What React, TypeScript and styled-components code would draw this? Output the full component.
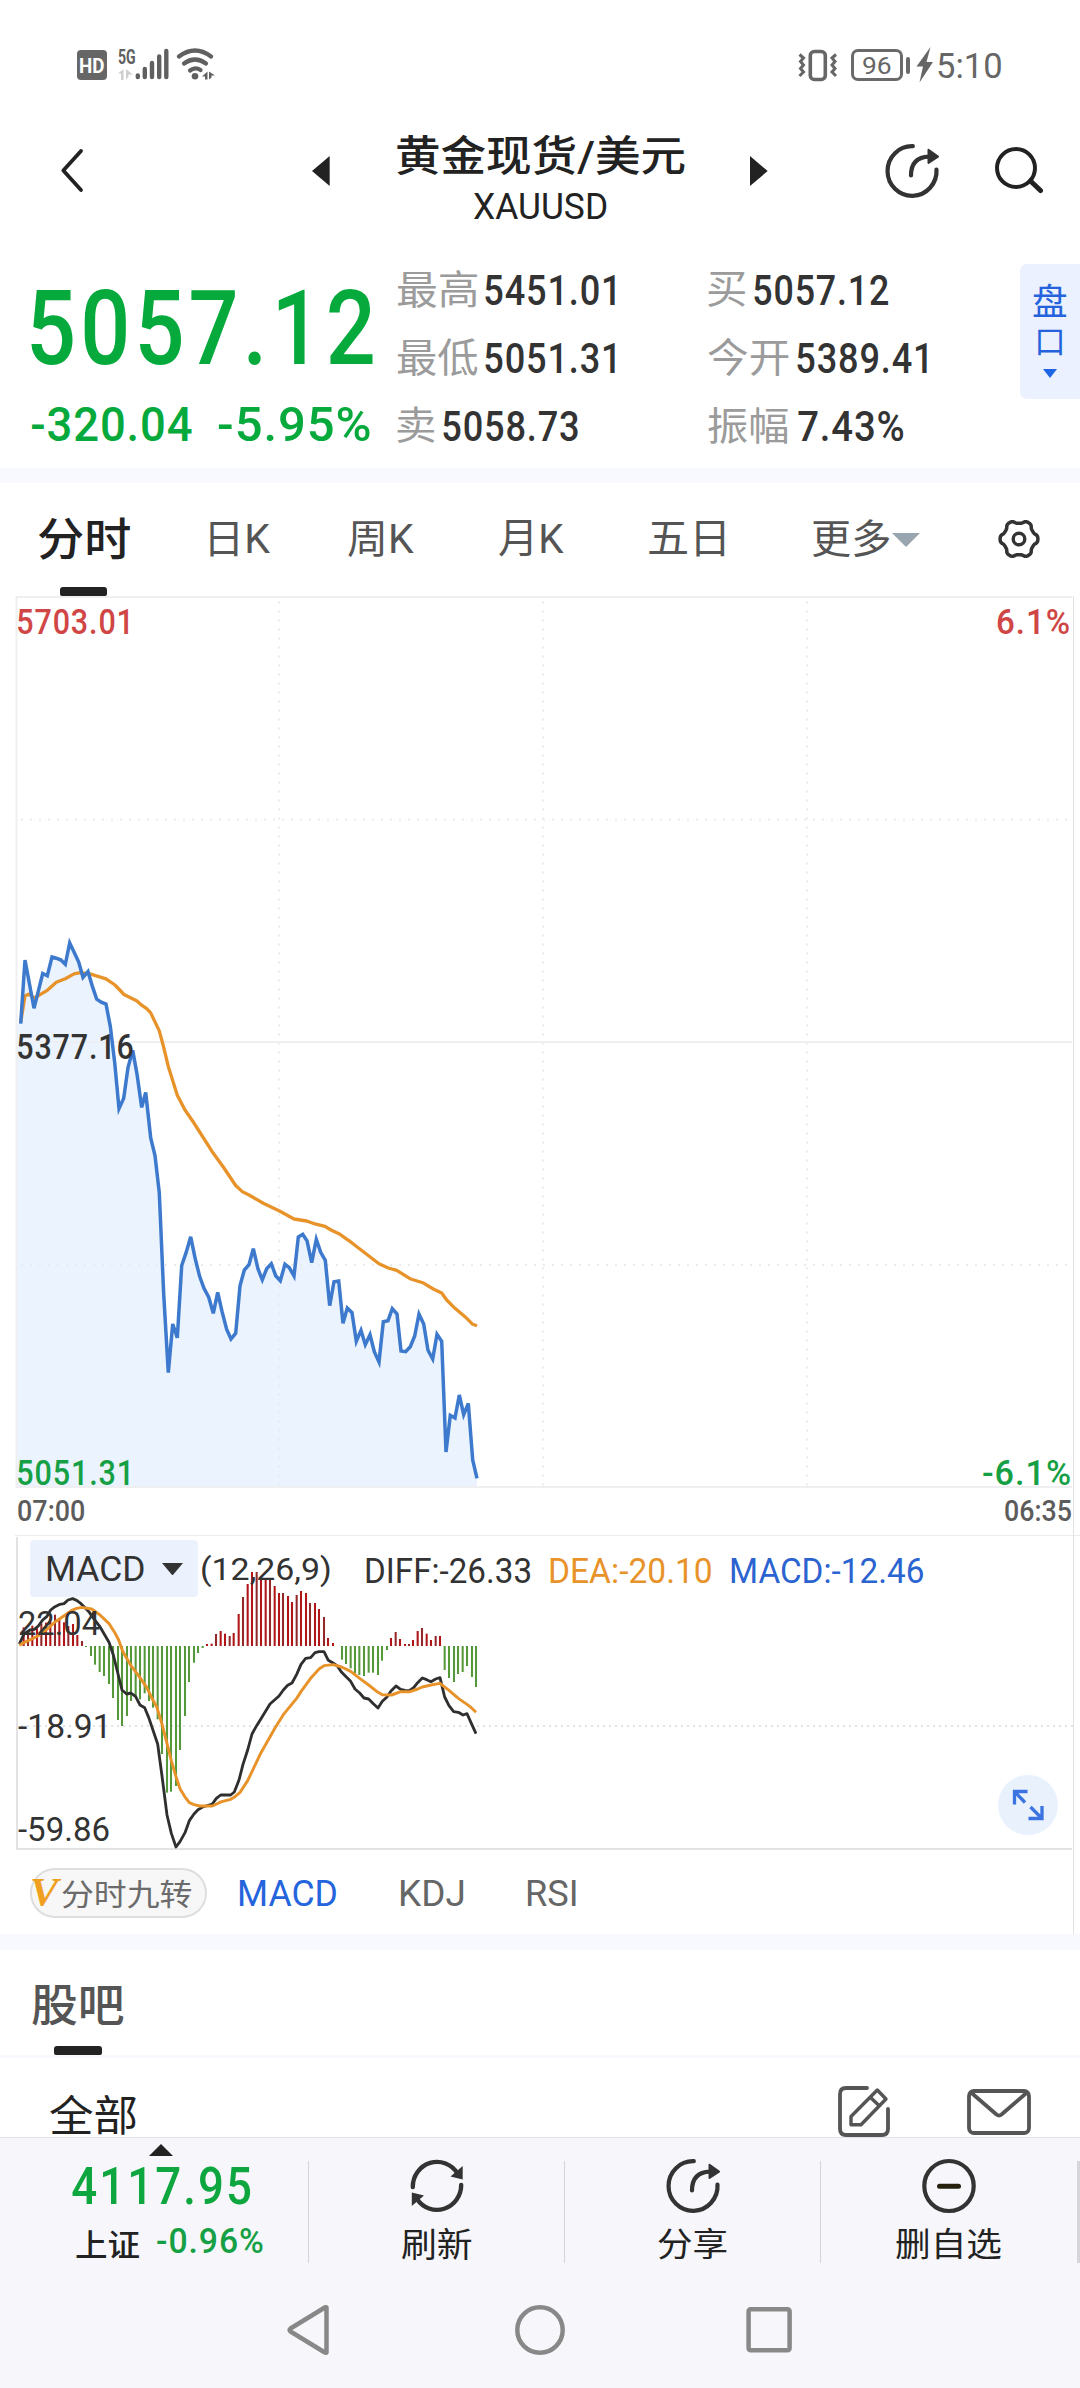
import React, { useLayoutEffect, useRef, useState } from "react";
import styled, { createGlobalStyle } from "styled-components";

const SANS = 'Roboto, "Noto Sans CJK SC", sans-serif';
const SERIF = '"Liberation Serif", serif';
const GREEN = "#06a93c";
const INK = "#222222";
const VALUE = "#333333";
const GREY = "#555555";
const BLUE = "#2563dd";
const ORANGE = "#e8932a";

const GlobalStyle = createGlobalStyle`
  html, body { margin: 0; padding: 0; background: #fff; }
  * { box-sizing: border-box; }
  svg { display: block; flex: none; }
`;

/* ---------- text that is fitted to the width of its column ---------- */

const FitBox = styled.span<{ $w: number; $h: number; $ml: number; $mt: number }>`
  display: block;
  flex: none;
  width: ${(p) => p.$w}px;
  height: ${(p) => p.$h}px;
  margin-left: ${(p) => p.$ml}px;
  margin-top: ${(p) => p.$mt}px;
`;

const FitInner = styled.span<{
  $size: number;
  $weight: number;
  $color: string;
  $family: string;
  $italic: boolean;
  $spacing: number;
}>`
  display: inline-block;
  vertical-align: top;
  white-space: nowrap;
  transform-origin: 0 0;
  font-family: ${(p) => p.$family};
  font-size: ${(p) => p.$size}px;
  font-weight: ${(p) => p.$weight};
  font-style: ${(p) => (p.$italic ? "italic" : "normal")};
  line-height: ${(p) => p.$size}px;
  letter-spacing: ${(p) => p.$spacing}px;
  color: ${(p) => p.$color};
`;

type FitProps = {
  children: string;
  w: number;
  h: number;
  size?: number;
  weight?: number;
  color?: string;
  family?: string;
  italic?: boolean;
  spacing?: number;
  ml?: number;
  mt?: number;
};

function Fit({
  children,
  w,
  h,
  size,
  weight = 400,
  color = INK,
  family = SANS,
  italic = false,
  spacing = 0,
  ml = 0,
  mt = 0,
}: FitProps) {
  const ref = useRef<HTMLSpanElement>(null);
  const [transform, setTransform] = useState("none");
  const fontSize = size ?? Math.round(h / 0.711);
  useLayoutEffect(() => {
    const ctx = document.createElement("canvas").getContext("2d");
    if (!ctx || !ref.current) return;
    ctx.font = `${italic ? "italic " : ""}${weight} ${fontSize}px ${family}`;
    const m = ctx.measureText(children);
    const inkW = m.actualBoundingBoxRight + m.actualBoundingBoxLeft + spacing * (children.length - 1);
    const inkH = m.actualBoundingBoxAscent + m.actualBoundingBoxDescent;
    const baseline = fontSize / 2 + (m.fontBoundingBoxAscent - m.fontBoundingBoxDescent) / 2;
    const sx = w / inkW;
    const sy = h / inkH;
    const tx = m.actualBoundingBoxLeft * sx;
    const ty = (m.actualBoundingBoxAscent - baseline) * sy;
    setTransform(`translate(${tx}px, ${ty}px) scale(${sx}, ${sy})`);
  }, [children, w, h, fontSize, weight, family, italic, spacing]);
  return (
    <FitBox $w={w} $h={h} $ml={ml} $mt={mt}>
      <FitInner
        ref={ref}
        $size={fontSize}
        $weight={weight}
        $color={color}
        $family={family}
        $italic={italic}
        $spacing={spacing}
        style={{ transform }}
      >
        {children}
      </FitInner>
    </FitBox>
  );
}

/* ---------- layout ---------- */

const Screen = styled.div`
  width: 1080px;
  height: 2388px;
  display: flex;
  flex-direction: column;
  background: #fff;
  overflow: hidden;
`;

const StatusBar = styled.div`
  height: 110px;
  padding: 46px 79px 0 76.5px;
  display: flex;
  justify-content: space-between;
`;

const StatusGroup = styled.div`
  height: 38px;
  display: flex;
  align-items: center;
`;

const HdBadge = styled.div`
  width: 30px;
  height: 30px;
  border-radius: 4px;
  background: #666;
  display: flex;
  align-items: center;
  justify-content: center;
`;

const NetworkLabel = styled.div`
  width: 17px;
  margin-left: 11.5px;
  display: flex;
  flex-direction: column;
  gap: 6px;
`;

const Battery = styled.div`
  width: 52.6px;
  height: 32px;
  margin-left: 13px;
  border: 3px solid #6a6a6a;
  border-radius: 7px;
  display: flex;
  align-items: center;
  justify-content: center;
`;

const BatteryNub = styled.div`
  width: 4px;
  height: 17px;
  margin-left: 2.6px;
  border-radius: 2px;
  background: #6a6a6a;
`;

const Header = styled.header`
  height: 130px;
  padding-left: 60px;
  display: flex;
  align-items: flex-start;
`;

const IconSlot = styled.div<{ $ml: number; $mt: number }>`
  margin-left: ${(p) => p.$ml}px;
  margin-top: ${(p) => p.$mt}px;
`;

const TitleBlock = styled.div`
  width: 288px;
  margin-left: 66.7px;
  padding-top: 24px;
  display: flex;
  flex-direction: column;
  align-items: center;
`;

const Quote = styled.section`
  height: 228px;
  display: flex;
`;

const PriceColumn = styled.div`
  width: 396.7px;
  padding: 48.7px 0 0 31px;
  flex: none;
`;

const ChangeRow = styled.div`
  display: flex;
  padding-top: 42px;
`;

const StatColumn = styled.div<{ $w: number }>`
  width: ${(p) => p.$w}px;
  flex: none;
  padding-top: 15.7px;
`;

const StatRow = styled.div`
  height: 68px;
  display: flex;
  align-items: center;
`;

const DepthBadge = styled.button`
  width: 60px;
  height: 134.7px;
  margin: 24px 0 0 auto;
  padding: 19.3px 0 0;
  border: 0;
  border-radius: 7px 0 0 7px;
  background: #ebf1fe;
  display: flex;
  flex-direction: column;
  align-items: center;
`;

const Band = styled.div<{ $h: number }>`
  height: ${(p) => p.$h}px;
  flex: none;
  background: #f7f9fe;
`;

const PeriodTabs = styled.nav`
  height: 113px;
  display: flex;
  align-items: center;
`;

const ActiveTab = styled.div`
  align-self: stretch;
  margin-left: 37.5px;
  display: flex;
  flex-direction: column;
  align-items: center;
  padding-top: 35px;
`;

const Underline = styled.div<{ $mt: number; $ml?: number }>`
  width: 47.5px;
  height: 9px;
  flex: none;
  margin-top: ${(p) => p.$mt}px;
  margin-left: ${(p) => p.$ml ?? 0}px;
  border-radius: 3px 3px 2px 2px;
  background: ${INK};
`;

const ChartArea = styled.section`
  position: relative;
  height: 1338px;
  flex: none;
  display: flex;
  flex-direction: column;
  &::after {
    content: "";
    position: absolute;
    left: 1073px;
    top: 0;
    width: 1px;
    height: 100%;
    background: #e2e2e2;
  }
`;

const ChartBox = styled.div<{ $h: number }>`
  position: relative;
  height: ${(p) => p.$h}px;
  flex: none;
`;

const AxisLabel = styled.div<{ $x: number; $y: number }>`
  position: absolute;
  left: ${(p) => p.$x}px;
  top: ${(p) => p.$y}px;
`;

const TimeRow = styled.div`
  height: 46px;
  margin-left: 15px;
  padding: 11px 9px 0 3px;
  border-bottom: 1px solid #ececee;
  display: flex;
  justify-content: space-between;
`;

const IndicatorHeader = styled.div`
  position: absolute;
  left: 30px;
  top: 4px;
  height: 57px;
  display: flex;
  align-items: center;
`;

const IndicatorSelect = styled.button`
  width: 168px;
  height: 57px;
  padding: 1px 15px 0 16.7px;
  border: 0;
  border-radius: 4px;
  background: #ebf2fe;
  display: flex;
  align-items: center;
  justify-content: space-between;
`;

const ExpandButton = styled.button`
  position: absolute;
  left: 998px;
  top: 239px;
  width: 60px;
  height: 60px;
  padding: 0;
  border: 0;
  border-radius: 50%;
  background: #e9f1fd;
  display: flex;
  align-items: center;
  justify-content: center;
`;

const IndicatorTabs = styled.div`
  height: 84px;
  padding: 1px 0 0 30px;
  display: flex;
  align-items: center;
`;

const Pill = styled.button`
  width: 177px;
  height: 50px;
  padding: 0;
  border: 2px solid #dedede;
  border-radius: 25px;
  background: #f7f7f7;
  display: flex;
  align-items: center;
`;

const ForumHead = styled.section`
  height: 108px;
  flex: none;
  padding: 35px 0 0 31.7px;
  border-bottom: 3px solid #f7f9fe;
`;

const ForumFilter = styled.section`
  height: 79px;
  flex: none;
  padding-left: 50px;
  display: flex;
  align-items: flex-start;
`;

const BottomBar = styled.footer`
  height: 127px;
  flex: none;
  border-top: 1px solid #e2e2e4;
  background: #f7f7fb;
  display: flex;
`;

const IndexCell = styled.div`
  width: 308px;
  padding-top: 5.5px;
  display: flex;
  flex-direction: column;
`;

const IndexRow = styled.div`
  display: flex;
`;

const Divider = styled.div<{ $w: number }>`
  width: ${(p) => p.$w}px;
  height: 102px;
  margin-top: 23px;
  flex: none;
  background: #d6d6d9;
`;

const ActionCell = styled.button`
  width: 255.2px;
  padding: 20px 0 0;
  border: 0;
  background: transparent;
  display: flex;
  flex-direction: column;
  align-items: center;
`;

const NavBar = styled.div`
  flex: 1;
  padding: 38px 0 0 284px;
  background: #f7f7fb;
  display: flex;
  align-items: flex-start;
`;

/* ---------- data ---------- */

const PRICE = `20.7,1023.6 25,960 34,1008.3 42.7,973.5 47.3,975.8 52,957 56.3,958.2 61,960.1 65.3,964.3 69.7,943 74,952 78.7,962 83,977.3 88,971.6 92.3,986.1 96.7,999.1 101.3,1002.2 106,1004.1 110.3,1026.3 114.7,1062.6 119,1108.6 123.7,1098.2 128,1067.6 132.7,1050.4 137,1074.1 141.7,1107.4 145.7,1092.5 150.7,1138 155,1155.6 159.3,1192.8 163.7,1294.2 168.3,1372.6 172.7,1324 177.3,1337.8 181.7,1265.5 186,1252.9 190.7,1236.8 195.3,1259 199.7,1276.6 204,1288.4 208.7,1297.2 213.3,1313.3 217.7,1292.3 222,1311.4 226.7,1329.4 231,1339 235.7,1333.2 240,1285.8 244.3,1270.1 249,1264.7 253.3,1248.7 258,1269 262.3,1279.7 266.7,1268.7 271.3,1263.7 275.7,1275.7 280.3,1280.7 285,1264.3 289.3,1267.7 294,1276 298.3,1237 302.7,1234.3 307,1240.7 311.7,1262.7 316.3,1239.3 320.7,1252.3 325.3,1260.3 329.7,1305.7 334,1281.7 338.7,1281 343,1323.3 347.3,1308 352,1312.7 356.3,1341.3 361,1330.3 365.3,1344.7 370,1334.7 374.3,1351.7 379,1362 383.3,1321.7 388,1320.7 392.3,1308.7 397,1314 401,1351 405.7,1351.7 410.3,1346.7 414.7,1336 419,1314 423.7,1324 428,1350.3 432.7,1359 437,1334.3 441.7,1341.3 446,1452 450.3,1415.3 455,1418 459.3,1395 463.7,1414.7 468.3,1403.3 472.7,1460 477,1478.3`;

const AVERAGE = `20.7,1022.5 25,995.7 29.3,994.1 34,998 38.3,995.7 47.3,990.3 56.3,982.3 65.3,978.8 74,973.9 80,972.7 90,973.9 106,978.8 115,985 124,994.5 137,1001 141.7,1005.2 146.7,1008.7 150.7,1012.9 159.3,1030.9 163.7,1047.3 168.3,1066.5 177.3,1095.2 185,1110 193.3,1122 213.3,1153.3 223.3,1167 235.7,1185.5 242.3,1191.6 249,1195 263.3,1203.2 280,1211.3 294,1219 306.7,1221 313,1223.3 325,1226.3 331,1230 340,1234.3 351.7,1242.7 365,1253 379,1263.7 388.3,1268 396.7,1270.3 410,1278.7 422.7,1282.7 433.3,1289 441.7,1293 446.7,1300 455,1308.3 465,1316.7 472.7,1324.3 477,1325.7`;

/* MACD coordinates use a grid three times finer than a pixel. */
const BARS: [number, number][] = [
  [71, 562], [84, 572], [97, 557], [111, 565], [124, 550], [138, 548], [151, 536], [165, 524], [178, 535], [192, 547], [205, 558], [219, 552], [232, 585], [246, 603],
  [258, 621], [273, 648], [285, 674], [299, 696], [312, 708], [327, 732], [339, 774], [354, 840], [366, 858], [381, 828], [393, 783], [407, 770], [420, 778], [434, 760], [447, 783], [459, 803], [473, 838], [486, 942], [501, 1058], [513, 1055], [528, 1038], [540, 930], [555, 828], [567, 726], [582, 668], [594, 639], [608, 624],
  [621, 612], [635, 611], [648, 582], [662, 573], [675, 581], [689, 588], [701, 579], [716, 522], [729, 471], [743, 432], [756, 396], [770, 396], [783, 412], [797, 417], [810, 420], [824, 438], [837, 459], [849, 459], [864, 468], [876, 486], [890, 465], [903, 453], [918, 459], [930, 489], [945, 489], [957, 507], [972, 531], [984, 594], [999, 609],
  [1026, 659], [1038, 672], [1052, 685], [1065, 700], [1078, 705], [1092, 708], [1106, 698], [1119, 698], [1134, 705], [1146, 662], [1161, 630],
  [1173, 594], [1187, 576], [1200, 597], [1215, 612], [1227, 612], [1239, 600], [1253, 573], [1266, 564], [1280, 581], [1293, 600], [1307, 588], [1320, 588],
  [1334, 690], [1347, 714], [1362, 726], [1374, 702], [1388, 696], [1401, 678], [1416, 711], [1428, 741],
];

const DIFF = `58,612 72,582 90,570 103,568 115,558 128,540 140,530 152,510 165,500 180,493 192,491 204,480 218,476 230,481 243,491 255,503 268,517 284,540 299,559 327,607 340,645 366,750 380,762 393,759 407,770 420,795 434,803 447,835 473,912 486,1008 501,1125 514,1180 528,1221 540,1205 555,1178 568,1142 582,1122 594,1109 608,1101 637,1092 649,1075 662,1065 692,1065 703,1056 717,1020 729,973 743,930 756,882 770,857 783,836 810,792 837,768 850,750 863,736 876,729 890,703 903,673 917,655 932,653 945,638 957,635 972,635 985,661 999,669 1012,678 1025,697 1039,711 1052,724 1065,747 1079,759 1092,774 1106,777 1120,791 1134,804 1147,784 1161,771 1173,753 1188,738 1202,748 1215,751 1228,752 1241,743 1253,728 1267,714 1280,719 1293,725 1307,717 1320,713 1334,771 1347,797 1361,815 1375,817 1389,825 1401,821 1414,850 1428,881`;

const DEA = `58,616 80,604 108,591 136,572 165,546 200,522 215,511 230,505 245,502 275,507 300,525 327,551 345,579 356,600 368,634 393,677 420,713 440,742 455,773 470,800 486,852 501,910 514,962 528,1010 540,1046 555,1071 568,1088 582,1094 600,1098 637,1098 665,1085 692,1078 705,1070 720,1057 743,1022 783,938 825,864 850,824 890,775 905,752 932,715 958,686 972,677 1000,674 1025,681 1052,694 1079,715 1106,735 1134,757 1147,764 1175,765 1202,755 1230,755 1253,747 1267,741 1293,735 1320,730 1347,751 1375,775 1401,793 1414,803 1428,817`;

const GEAR = Array.from({ length: 120 }, (_, i) => {
  const a = (i / 120) * Math.PI * 2;
  const r = 17.3 + (1.6 * Math.tanh(1.6 * Math.cos(6 * a))) / Math.tanh(1.6);
  return `${(22 + r * Math.cos(a)).toFixed(2)},${(22 + r * Math.sin(a)).toFixed(2)}`;
}).join(" ");

/* ---------- icons ---------- */

const SignalIcon = () => (
  <svg width="35" height="38" viewBox="134 46 35 38">
    <path d="M136.8 75.5v1.500M143.800 69v8M151 63v14M158.200 56.500v20.500M165.300 51v26" stroke="#606060" strokeWidth="4.400" strokeLinecap="round" />
  </svg>
);

const WifiIcon = () => (
  <svg width="40" height="38" viewBox="176 46 40 38">
    <g fill="none" stroke="#606060" strokeWidth="4.200" strokeLinecap="round">
      <path d="M179 56.500Q195 44.500 211 56.500" />
      <path d="M184 63.500Q195 55.500 206 63.500" />
      <path d="M190 70.500Q195 66.500 200.500 70" />
    </g>
    <circle cx="195" cy="76.300" r="3.300" fill="#606060" />
    <path d="M202 76.500l5.500-5V79.500h-2.500V76.500zM209 71.500v8l2.500-2v-2H215z" fill="#606060" />
  </svg>
);

const VibrateIcon = () => (
  <svg width="40" height="36" viewBox="799 46 40 36">
    <rect x="811.300" y="50.500" width="15" height="28" rx="4" fill="none" stroke="#666" strokeWidth="3.600" />
    <g fill="none" stroke="#666" strokeWidth="3">
      <path d="M800.500 53.500l4 3.500-3 3.500 3 3.500-3 3.500 3 3.500-4 4" />
      <path d="M837 53.500l-4 3.500 3 3.500-3 3.500 3 3.500-3 3.500 4 4" />
    </g>
  </svg>
);

const ShareIcon = () => (
  <svg width="56" height="56" viewBox="0 0 56 56">
    <path d="M28.800 3.200A24.500 24.800 0 1 0 52.500 26.500" fill="none" stroke="#333" strokeWidth="4.200" strokeLinecap="round" />
    <path d="M27 32.500C27 21 32.500 14 45 13.600" fill="none" stroke="#333" strokeWidth="4.200" strokeLinecap="round" />
    <path d="M44.500 6.800L54 13.600 44.500 20z" fill="#333" stroke="#333" strokeWidth="2" strokeLinejoin="round" />
  </svg>
);

const RefreshIcon = () => (
  <svg width="56" height="56" viewBox="0 0 56 56">
    <g fill="none" stroke="#333" strokeWidth="4.400" strokeLinecap="round">
      <path d="M3.800 29A24.200 24.800 0 0 1 48.500 15.500" />
      <path d="M52.200 27A24.200 24.800 0 0 1 8 41" />
    </g>
    <path d="M53.700 8v13.500L41.500 18.500zM2.800 34.500V48L15 37.500z" fill="#333" />
  </svg>
);

const MinusIcon = () => (
  <svg width="56" height="56" viewBox="0 0 56 56">
    <ellipse cx="28" cy="28" rx="24.700" ry="25" fill="none" stroke="#333" strokeWidth="4.200" />
    <path d="M18.500 28.300h19" stroke="#26200f" strokeWidth="5" strokeLinecap="round" />
  </svg>
);

/* ---------- charts ---------- */

const PriceChart = () => (
  <svg width="1080" height="894" viewBox="0 596 1080 894">
    <polygon points={`16.500,1487 16.500,1023 ${PRICE} 477,1487`} fill="#eaf3fe" />
    <g fill="none" stroke="#efeff1" strokeWidth="2">
      <path d="M16.500 1488V597H1072M16 1487H1072M16 1042H1072" />
      <path d="M279 601.500V1487M543 601.500V1487M807 601.500V1487" strokeDasharray="2 7" stroke="#e9ebee" />
      <path d="M21 819.500H1072M21 1265H1072" strokeDasharray="2 7" stroke="#e9ebee" />
    </g>
    <polyline points={AVERAGE} fill="none" stroke={ORANGE} strokeWidth="3.300" strokeLinejoin="round" />
    <polyline points={PRICE} fill="none" stroke="#3d79cc" strokeWidth="3.500" />
  </svg>
);

const MacdChart = () => (
  <svg width="1080" height="314" viewBox="0 1536 1080 314">
    <path d="M17 1537V1849H1072" fill="none" stroke="#e2e2e4" strokeWidth="2" />
    <path d="M21 1726H1073" stroke="#e3e3e5" strokeWidth="2" strokeDasharray="2 4" />
    <g transform="translate(0 1440) scale(.333333)" fill="none">
      {BARS.map(([x, y], i) => (
        <path key={x} d={`M${x} 618V${y}`} stroke={y > 618 ? "#55983a" : i % 3 === 1 ? "#93282b" : "#b01518"} strokeWidth="6.200" />
      ))}
      <polyline points={DIFF} stroke="#2f2f2f" strokeWidth="8.500" strokeLinejoin="round" />
      <polyline points={DEA} stroke={ORANGE} strokeWidth="8.800" strokeLinejoin="round" />
    </g>
  </svg>
);

/* ---------- page ---------- */

type Stat = { label: string; lw: number; lh: number; value: string; vw: number; gap: number };

const LEFT_STATS: Stat[] = [
  { label: "最高", lw: 80.6, lh: 37.7, value: "5451.01", vw: 130, gap: 7.6 },
  { label: "最低", lw: 80.6, lh: 37.7, value: "5051.31", vw: 130, gap: 7.6 },
  { label: "卖", lw: 37.5, lh: 36.5, value: "5058.73", vw: 135, gap: 8.8 },
];
const RIGHT_STATS: Stat[] = [
  { label: "买", lw: 37.5, lh: 35.5, value: "5057.12", vw: 134.5, gap: 8.4 },
  { label: "今开", lw: 80.3, lh: 38.5, value: "5389.41", vw: 130, gap: 8 },
  { label: "振幅", lw: 79.5, lh: 37.7, value: "7.43%", vw: 105.5, gap: 9.8 },
];

const Stats = ({ items, width }: { items: Stat[]; width: number }) => (
  <StatColumn $w={width}>
    {items.map((s) => (
      <StatRow key={s.label}>
        <Fit w={s.lw} h={s.lh} size={42} color="#9b9b9b">{s.label}</Fit>
        <Fit w={s.vw} h={31.3} weight={500} color={VALUE} spacing={1} ml={s.gap}>{s.value}</Fit>
      </StatRow>
    ))}
  </StatColumn>
);

export default function App() {
  return (
    <Screen>
      <GlobalStyle />
      <StatusBar>
        <StatusGroup>
          <HdBadge><Fit w={24} h={15} weight={700} color="#fff">HD</Fit></HdBadge>
          <NetworkLabel>
            <Fit w={17} h={13.6} weight={700} color="#606060">5G</Fit>
            <svg width="16" height="11" viewBox="0 0 16 11">
              <path d="M0 4.500L5.500 0v11H3V4.500zM8 0v11l2.500-3.500V5.500H15z" fill="#cfcfcf" />
            </svg>
          </NetworkLabel>
          <SignalIcon />
          <IconSlot $ml={6} $mt={0}><WifiIcon /></IconSlot>
        </StatusGroup>
        <StatusGroup>
          <VibrateIcon />
          <Battery><Fit w={27.5} h={18} color="#666">96</Fit></Battery>
          <BatteryNub />
          <svg width="26" height="38" viewBox="908 46 26 38">
            <path d="M928.500 47L914.500 66.500H921L917.500 82.500 931 62H924.500z" fill="#666" />
          </svg>
          <Fit w={63} h={25} color="#666" ml={2}>5:10</Fit>
        </StatusGroup>
      </StatusBar>

      <Header>
        <IconSlot $ml={0} $mt={37}>
          <svg width="24" height="46" viewBox="60 147 24 46">
            <path d="M81 151L63.300 170.500 81 190" fill="none" stroke={INK} strokeWidth="3.800" strokeLinecap="round" strokeLinejoin="round" />
          </svg>
        </IconSlot>
        <IconSlot $ml={228.3} $mt={46}>
          <svg width="17.700" height="30" viewBox="0 0 17.700 30"><path d="M17.700 0v30L0 15z" fill={INK} /></svg>
        </IconSlot>
        <TitleBlock>
          <Fit w={288} h={42} size={46} weight={500}>黄金现货/美元</Fit>
          <Fit w={132.5} h={26.3} size={36} mt={17}>XAUUSD</Fit>
        </TitleBlock>
        <IconSlot $ml={65.3} $mt={46}>
          <svg width="17.700" height="30" viewBox="0 0 17.700 30"><path d="M0 0v30L17.700 15z" fill={INK} /></svg>
        </IconSlot>
        <IconSlot $ml={116} $mt={33}><ShareIcon /></IconSlot>
        <IconSlot $ml={53.5} $mt={35}>
          <svg width="50" height="50" viewBox="994 145 50 50">
            <circle cx="1017" cy="168" r="19" fill="none" stroke={INK} strokeWidth="4" />
            <path d="M1031.500 181L1041.500 190.500" stroke={INK} strokeWidth="5" strokeLinecap="round" />
          </svg>
        </IconSlot>
      </Header>

      <Quote>
        <PriceColumn>
          <Fit w={342} h={75.5} weight={500} color={GREEN} spacing={5}>5057.12</Fit>
          <ChangeRow>
            <Fit w={160} h={36.7} weight={500} color={GREEN} spacing={1} ml={1}>-320.04</Fit>
            <Fit w={150.5} h={36.7} weight={500} color={GREEN} spacing={1} ml={27.4}>-5.95%</Fit>
          </ChangeRow>
        </PriceColumn>
        <Stats items={LEFT_STATS} width={311.8} />
        <Stats items={RIGHT_STATS} width={240} />
        <DepthBadge>
          <Fit w={33.5} h={34.3} size={34} color={BLUE}>盘</Fit>
          <Fit w={24} h={27} size={34} color={BLUE} mt={11}>口</Fit>
          <IconSlot $ml={0} $mt={13.3}>
            <svg width="14" height="9" viewBox="0 0 14 9"><path d="M0 0h14L7 9z" fill="#1f66e5" /></svg>
          </IconSlot>
        </DepthBadge>
      </Quote>

      <Band $h={15} />

      <PeriodTabs>
        <ActiveTab>
          <Fit w={92.3} h={43} size={46} weight={500}>分时</Fit>
          <Underline $mt={26} />
        </ActiveTab>
        <Fit w={60.5} h={35.5} size={42} color={GREY} ml={80}>日K</Fit>
        <Fit w={66.2} h={37} size={42} color={GREY} ml={77.5}>周K</Fit>
        <Fit w={65.2} h={36.5} size={42} color={GREY} ml={85.5}>月K</Fit>
        <Fit w={75.2} h={35.7} size={42} color={GREY} ml={84}>五日</Fit>
        <Fit w={77.5} h={38.5} size={42} color={GREY} ml={88.5}>更多</Fit>
        <IconSlot $ml={2} $mt={0}>
          <svg width="28" height="14" viewBox="0 0 28 14"><path d="M0 0h28L14 14z" fill="#98a4ae" /></svg>
        </IconSlot>
        <IconSlot $ml={77.5} $mt={-1}>
          <svg width="44" height="44" viewBox="0 0 44 44">
            <polygon points={GEAR} fill="none" stroke="#333" strokeWidth="3.500" strokeLinejoin="round" />
            <circle cx="22" cy="22" r="5.800" fill="none" stroke="#333" strokeWidth="3.400" />
          </svg>
        </IconSlot>
      </PeriodTabs>

      <ChartArea>
        <ChartBox $h={894}>
          <PriceChart />
          <AxisLabel $x={18} $y={13}><Fit w={110.8} h={25} weight={500} color="#d04545" spacing={1}>5703.01</Fit></AxisLabel>
          <AxisLabel $x={997.3} $y={13}><Fit w={72.3} h={25} weight={500} color="#d04545" spacing={1}>6.1%</Fit></AxisLabel>
          <AxisLabel $x={18} $y={438}><Fit w={115} h={25} weight={500} color={VALUE} spacing={1}>5377.16</Fit></AxisLabel>
          <AxisLabel $x={18} $y={864}><Fit w={111} h={25} weight={500} color="#16a045" spacing={1}>5051.31</Fit></AxisLabel>
          <AxisLabel $x={982.8} $y={864}><Fit w={87.3} h={25} weight={500} color="#16a045" spacing={1}>-6.1%</Fit></AxisLabel>
        </ChartBox>
        <TimeRow>
          <Fit w={66} h={20.7} weight={500} color="#5c5c5c">07:00</Fit>
          <Fit w={66.5} h={20.7} weight={500} color="#5c5c5c">06:35</Fit>
        </TimeRow>
        <ChartBox $h={314}>
          <MacdChart />
          <AxisLabel $x={18.7} $y={76}><Fit w={81} h={23} color={VALUE}>22.04</Fit></AxisLabel>
          <AxisLabel $x={18} $y={179.3}><Fit w={87.3} h={23} color={VALUE}>-18.91</Fit></AxisLabel>
          <AxisLabel $x={18} $y={282}><Fit w={91} h={23} color={VALUE}>-59.86</Fit></AxisLabel>
          <IndicatorHeader>
            <IndicatorSelect>
              <Fit w={97} h={25.3} color={VALUE}>MACD</Fit>
              <svg width="21" height="12.500" viewBox="0 0 21 12.500"><path d="M0 0h21L10.500 12.500z" fill={VALUE} /></svg>
            </IndicatorSelect>
            <Fit w={128} h={32.5} size={34} color={VALUE} ml={4} mt={5}>(12,26,9)</Fit>
            <Fit w={164} h={24.3} color={VALUE} ml={35.7} mt={6}>DIFF:-26.33</Fit>
            <Fit w={161.6} h={24.3} color={ORANGE} ml={20.4} mt={6}>DEA:-20.10</Fit>
            <Fit w={192.3} h={24.3} color="#2b63d0" ml={19.3} mt={6}>MACD:-12.46</Fit>
          </IndicatorHeader>
          <ExpandButton>
            <svg width="32" height="32" viewBox="0 0 32 32">
              <path d="M15.500 2.500H2.500v13M2.500 2.500L13 13.500M30 17v12.500H16.500M30 29.500L18.500 18" fill="none" stroke="#3b73e0" strokeWidth="3.300" />
            </svg>
          </ExpandButton>
        </ChartBox>
        <IndicatorTabs>
          <Pill>
            <Fit w={30} h={27} weight={700} family={SERIF} italic color="#efa020" ml={-2} size={40}>V</Fit>
            <Fit w={129.3} h={30} size={32} color="#6b6b6b" ml={1.3} mt={2}>分时九转</Fit>
          </Pill>
          <Fit w={96.7} h={26} color="#2464dc" ml={33.3}>MACD</Fit>
          <Fit w={62.4} h={26} color="#666" ml={64.3}>KDJ</Fit>
          <Fit w={47.7} h={26} color="#666" ml={64.8}>RSI</Fit>
        </IndicatorTabs>
      </ChartArea>

      <Band $h={16} />

      <ForumHead>
        <Fit w={91.6} h={41.5} size={46} weight={500} color={GREY}>股吧</Fit>
        <Underline $mt={19.5} $ml={22.7} />
      </ForumHead>

      <ForumFilter>
        <Fit w={86} h={41.5} size={44} mt={35}>全部</Fit>
        <IconSlot $ml={700} $mt={26}>
          <svg width="56" height="53" viewBox="836 2084 56 53">
            <g fill="none" stroke={GREY} strokeLinecap="round" strokeLinejoin="round">
              <path d="M867 2088H846Q840 2088 840 2094V2129Q840 2135 846 2135H882Q888 2135 888 2129V2109" strokeWidth="3.800" />
              <path d="M851 2116.500L877.300 2090 886 2099 861 2124.800H851zM870.500 2097.500L879 2105.500" strokeWidth="3.400" />
            </g>
          </svg>
        </IconSlot>
        <IconSlot $ml={73} $mt={28}>
          <svg width="68" height="50" viewBox="965 2086 68 50">
            <g fill="none" stroke={GREY} strokeWidth="3.800" strokeLinejoin="round">
              <rect x="969" y="2091" width="60" height="42" rx="5" />
              <path d="M971 2092.500L996.500 2114.500Q999 2116.500 1001.500 2114.500L1027 2092.500" />
            </g>
          </svg>
        </IconSlot>
      </ForumFilter>

      <BottomBar>
        <IndexCell>
          <IconSlot $ml={149} $mt={0}>
            <svg width="24" height="12" viewBox="0 0 24 12"><path d="M0 12h24L12 0z" fill={INK} /></svg>
          </IconSlot>
          <Fit w={179} h={39} weight={500} color="#0ea63f" spacing={2.5} ml={71.6} mt={10.7}>4117.95</Fit>
          <IndexRow>
            <Fit w={63} h={29} size={32} weight={500} ml={75.8} mt={24.7}>上证</Fit>
            <Fit w={105.5} h={25.3} weight={500} color="#16a045" spacing={1} ml={18} mt={23}>-0.96%</Fit>
          </IndexRow>
        </IndexCell>
        <Divider $w={1} />
        <ActionCell>
          <RefreshIcon />
          <Fit w={69.7} h={32.7} size={36} mt={13}>刷新</Fit>
        </ActionCell>
        <Divider $w={1} />
        <ActionCell>
          <ShareIcon />
          <Fit w={69.2} h={32.7} size={36} mt={13}>分享</Fit>
        </ActionCell>
        <Divider $w={1} />
        <ActionCell>
          <MinusIcon />
          <Fit w={105} h={32.7} size={36} mt={13}>删自选</Fit>
        </ActionCell>
        <Divider $w={3.5} />
      </BottomBar>

      <NavBar>
        <svg width="50" height="56" viewBox="284 2302 50 56">
          <path d="M326.500 2307.500V2352.500Q325 2353 324 2352L290.500 2331.500Q289 2330 290.500 2328.500L324 2308Q325 2307 326.500 2307.500z" fill="none" stroke="#888" strokeWidth="4.500" strokeLinejoin="round" />
        </svg>
        <IconSlot $ml={178} $mt={0}>
          <svg width="56" height="56" viewBox="512 2302 56 56">
            <circle cx="540" cy="2330" r="22.700" fill="none" stroke="#888" strokeWidth="4.500" />
          </svg>
        </IconSlot>
        <IconSlot $ml={176} $mt={0}>
          <svg width="50" height="56" viewBox="744 2302 50 56">
            <rect x="748.600" y="2309.300" width="41" height="41" rx="2" fill="none" stroke="#888" strokeWidth="4.500" />
          </svg>
        </IconSlot>
      </NavBar>
    </Screen>
  );
}
